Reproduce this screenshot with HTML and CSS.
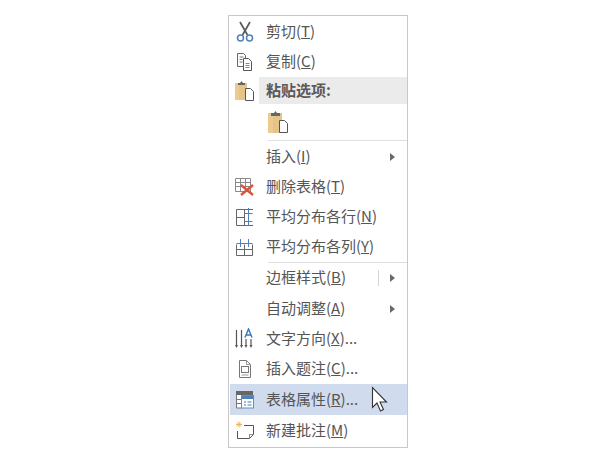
FILE: index.html
```html
<!DOCTYPE html>
<html lang="zh">
<head>
<meta charset="utf-8">
<title>表格右键菜单</title>
<link rel="stylesheet" href="styles.css">
</head>
<body>
<div class="menu">
  <div class="row r30">
    <span class="ico"><svg width="20" height="22" viewBox="0 0 20 22" fill="none"><path d="M5 1l7.500 13M15 1L7.500 14" stroke="#5a5a5a" stroke-width="1.700"/><circle cx="5.500" cy="17" r="3" stroke="#4f81b8" stroke-width="1.500"/><circle cx="14.500" cy="17" r="3" stroke="#4f81b8" stroke-width="1.500"/></svg></span>
    <span class="label">剪切(<u>T</u>)</span>
  </div>
  <div class="row r30">
    <span class="ico"><svg width="20" height="20" viewBox="0 0 20 20" fill="#fff"><path d="M2.500 1.500h6l2 2v11h-8z" stroke="#666"/><path d="M4.500 5h4M4.500 7.500h3M4.500 10h3" stroke="#777"/><path d="M8.500 6.500h5l3 3v9h-8z" stroke="#555"/><path d="M10.500 11.500h4M10.500 13.500h4M10.500 15.500h4" stroke="#5f8fc0"/></svg></span>
    <span class="label">复制(<u>C</u>)</span>
  </div>
  <div class="row r27">
    <span class="ico"><svg width="20" height="21" viewBox="0 0 20 21"><rect x="0" y="3" width="12" height="17" fill="#e6c488"/><rect x="0" y="3" width="4" height="17" fill="#ecca90"/><path d="M3 5V3h2L6.500 1 8 3h2v2z" fill="#666"/><path d="M10.500 8.500h5l3 3v9h-8z" fill="#fff" stroke="#555"/></svg></span>
    <span class="label head">粘贴选项:</span>
  </div>
  <div class="row rpaste">
    <span class="ico"></span>
    <span class="paste"><svg width="21" height="24" viewBox="0 0 21 24"><rect x="0" y="3" width="14" height="20" fill="#e6c488"/><rect x="0" y="3" width="5" height="20" fill="#ecca90"/><path d="M3 6V3h3L7.500 1 9 3h3v3z" fill="#666"/><path d="M11.500 10.500h5l3 3v9h-8z" fill="#fff" stroke="#555"/></svg></span>
  </div>
  <div class="sep sep-a"></div>
  <div class="row r30">
    <span class="ico"></span>
    <span class="label">插入(<u>I</u>)</span>
    <span class="arrow"></span>
  </div>
  <div class="row r30">
    <span class="ico"><svg width="20" height="20" viewBox="0 0 20 20" fill="none"><path d="M.5 1.500h15v13H.5zM.5 5.500h15M.5 9.500h15M5.500 1.500v13M10.500 1.500v13" stroke="#8a8a8a"/><path d="M6 8l12 10M18 8L6 18" stroke="#d9543f" stroke-width="2.400"/></svg></span>
    <span class="label">删除表格(<u>T</u>)</span>
  </div>
  <div class="row r30">
    <span class="ico"><svg width="18" height="20" viewBox="0 0 18 20" fill="none"><path d="M17 2.500H.5v16H17M8.500 2.500v16M.5 10.500h8" stroke="#666"/><path d="M8.500 6.500h8M8.500 14.500h8M12.500 1v18" stroke="#4f81b8"/></svg></span>
    <span class="label">平均分布各行(<u>N</u>)</span>
  </div>
  <div class="row r30">
    <span class="ico"><svg width="18" height="20" viewBox="0 0 18 20" fill="none"><path d="M.5 7.500v11h16v-11M8.500 7.500v11M.5 12.500h16" stroke="#666"/><path d="M.5 6.500h16M4.500 2v8M12.500 2v8" stroke="#4f81b8"/></svg></span>
    <span class="label">平均分布各列(<u>Y</u>)</span>
  </div>
  <div class="sep sep-b"></div>
  <div class="row r30">
    <span class="ico"></span>
    <span class="label">边框样式(<u>B</u>)</span>
    <span class="divider"></span>
    <span class="arrow"></span>
  </div>
  <div class="row r30 gap1">
    <span class="ico"></span>
    <span class="label">自动调整(<u>A</u>)</span>
    <span class="arrow"></span>
  </div>
  <div class="row r30">
    <span class="ico"><svg width="22" height="22" viewBox="0 0 22 22" fill="none"><path d="M2.500 2v16M7.500 2v16M12 11v7M17 11v7" stroke="#555" stroke-width="1.200"/><path d="M1 17l1.500 3L4 17zM6 17l1.500 3L9 17zM10.500 17l1.500 3 1.500-3zM15.500 17l1.500 3 1.500-3z" fill="#555"/><path d="M11 9.500L14.500 1l3.500 8.500M12.200 7h4.600" stroke="#3f78b8" stroke-width="1.500"/></svg></span>
    <span class="label">文字方向(<u>X</u>)...</span>
  </div>
  <div class="row r30">
    <span class="ico"><svg width="18" height="20" viewBox="0 0 18 20" fill="none"><path d="M3.500 1.500h7l4 4v13h-11z" stroke="#777"/><path d="M10.500 1.500v4h4" stroke="#999"/><rect x="5.500" y="7.500" width="7" height="6" stroke="#777"/><path d="M5.500 16h7" stroke="#999"/></svg></span>
    <span class="label">插入题注(<u>C</u>)...</span>
  </div>
  <div class="row r31 hover">
    <span class="ico"><svg width="20" height="19" viewBox="0 0 20 19" fill="none"><rect x="1" y="1" width="17" height="4" fill="#666"/><path d="M1.500 5v13h5V5M1.500 9.500h5M1.500 13.500h5" stroke="#777" fill="#fff"/><rect x="6.500" y="5.500" width="12" height="12.500" fill="#fff" stroke="#5f8fc0"/><rect x="6.500" y="6" width="12" height="3" fill="#4f81b8"/><path d="M9 12h2M9 15h2M12.500 12h4M12.500 15h4" stroke="#3f78b8"/></svg></span>
    <span class="label">表格属性(<u>R</u>)...</span>
  </div>
  <div class="row r31">
    <span class="ico"><svg width="20" height="20" viewBox="0 0 20 20" fill="none"><path d="M9 4.500h9.500v9l-4 4h-12V10" stroke="#555"/><path d="M14.500 17.500v-4h4" stroke="#888"/><path d="M1 3.500h6M4 .5v6M2 1.500l4 4M6 1.500l-4 4" stroke="#eab75a"/></svg></span>
    <span class="label">新建批注(<u>M</u>)</span>
  </div>
  <svg class="cursor" width="18" height="28" viewBox="0 0 18 28"><path d="M1.500 1.500v20l4.500-4.500 3.500 8 3-1.500-3.500-7.500h6.500z" fill="#fff" stroke="#333" stroke-width="1.100"/></svg>
</div>
</body>
</html>
```
FILE: styles.css
```css
html, body {
  margin: 0;
  background: #fff;
}
body {
  padding: 15px 0 0 228px;
}
.menu {
  position: relative;
  box-sizing: border-box;
  width: 180px;
  height: 433px;
  padding-top: 1px;
  border: 1px solid #c8c8c8;
  font-family: "Noto Sans CJK SC", "Noto Sans", sans-serif;
  font-size: 15px;
  color: #555;
}
.row {
  display: flex;
  align-items: center;
  margin-left: 1px;
}
.r30 { height: 30px; }
.r27 { height: 27px; }
.r31 { height: 31px; }
.rpaste { height: 36px; }
.gap1 { margin-top: 1px; }
.ico {
  flex: none;
  width: 29px;
  height: 100%;
  display: flex;
  align-items: center;
  justify-content: center;
}
.label {
  flex: 1;
  padding-left: 7px;
  padding-bottom: 2px;
  white-space: nowrap;
  line-height: 20px;
}
.head {
  align-self: stretch;
  display: flex;
  align-items: center;
  box-sizing: border-box;
  background: #ebebeb;
  font-weight: 700;
  color: #5a5a5a;
}
.paste {
  display: flex;
  padding-left: 9px;
}
.hover {
  background: #d0dcee;
}
.sep {
  height: 1px;
  margin-left: 39px;
  background: #dfdfdf;
}
.sep-a { margin-bottom: 1px; }
.sep-b { margin-top: 0; }
.arrow {
  flex: none;
  width: 0;
  height: 0;
  margin-right: 12px;
  border-left: 5px solid #6a6a6a;
  border-top: 4px solid transparent;
  border-bottom: 4px solid transparent;
}
.divider {
  flex: none;
  width: 1px;
  height: 16px;
  margin-right: 11px;
  background: #d4d4d4;
}
.cursor {
  position: absolute;
  left: 142px;
  top: 370px;
}
```
